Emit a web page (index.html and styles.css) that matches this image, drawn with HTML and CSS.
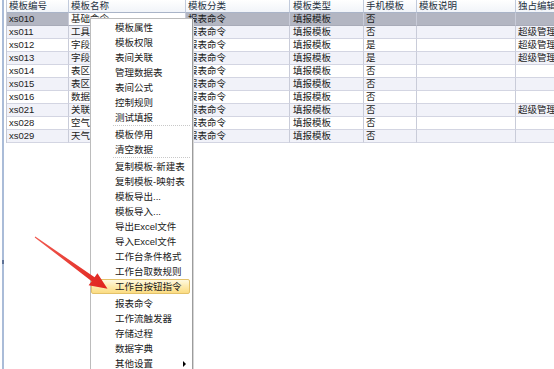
FILE: index.html
```html
<!DOCTYPE html>
<html lang="zh-CN">
<head>
<meta charset="utf-8">
<title>模板列表</title>
<link rel="stylesheet" href="styles.css">
</head>
<body>
<div class="screen">
  <div class="splitter"><span class="grip"></span></div>
  <div class="grid-wrap">
    <table class="grid">
      <colgroup>
        <col class="c1"><col class="c2"><col class="c3"><col class="c4"><col class="c5"><col class="c6"><col class="c7">
      </colgroup>
      <thead>
        <tr><th>模板编号</th><th>模板名称</th><th>模板分类</th><th>模板类型</th><th>手机模板</th><th>模板说明</th><th>独占编辑的用户</th></tr>
      </thead>
      <tbody>
        <tr class="sel"><td>xs010</td><td class="focus">基础命令</td><td>报表命令</td><td>填报模板</td><td>否</td><td></td><td></td></tr>
        <tr class="alt"><td>xs011</td><td>工具栏按钮</td><td>报表命令</td><td>填报模板</td><td>否</td><td></td><td>超级管理员</td></tr>
        <tr><td>xs012</td><td>字段映射</td><td>报表命令</td><td>填报模板</td><td>是</td><td></td><td>超级管理员</td></tr>
        <tr class="alt"><td>xs013</td><td>字段映射表</td><td>报表命令</td><td>填报模板</td><td>是</td><td></td><td>超级管理员</td></tr>
        <tr><td>xs014</td><td>表区域</td><td>报表命令</td><td>填报模板</td><td>否</td><td></td><td></td></tr>
        <tr class="alt"><td>xs015</td><td>表区域二</td><td>报表命令</td><td>填报模板</td><td>否</td><td></td><td></td></tr>
        <tr><td>xs016</td><td>数据关联</td><td>报表命令</td><td>填报模板</td><td>否</td><td></td><td></td></tr>
        <tr class="alt"><td>xs021</td><td>关联报表</td><td>报表命令</td><td>填报模板</td><td>否</td><td></td><td>超级管理员</td></tr>
        <tr><td>xs028</td><td>空气质量</td><td>报表命令</td><td>填报模板</td><td>否</td><td></td><td></td></tr>
        <tr class="alt"><td>xs029</td><td>天气预报</td><td>报表命令</td><td>填报模板</td><td>否</td><td></td><td></td></tr>
      </tbody>
    </table>
  </div>

  <div class="menu">
    <div class="item">模板属性</div>
    <div class="item">模板权限</div>
    <div class="item">表间关联</div>
    <div class="item">管理数据表</div>
    <div class="item">表间公式</div>
    <div class="item">控制规则</div>
    <div class="item">测试填报</div>
    <div class="sep"></div>
    <div class="item">模板停用</div>
    <div class="item">清空数据</div>
    <div class="sep"></div>
    <div class="item">复制模板-新建表</div>
    <div class="item">复制模板-映射表</div>
    <div class="item">模板导出...</div>
    <div class="item">模板导入...</div>
    <div class="item">导出Excel文件</div>
    <div class="item">导入Excel文件</div>
    <div class="item">工作台条件格式</div>
    <div class="item">工作台取数规则</div>
    <div class="item hot">工作台按钮指令</div>
    <div class="sep blank"></div>
    <div class="item">报表命令</div>
    <div class="item">工作流触发器</div>
    <div class="item">存储过程</div>
    <div class="item">数据字典</div>
    <div class="item">其他设置<span class="caret"></span></div>
  </div>

  <svg class="arrow" width="554" height="369" viewBox="0 0 554 369" aria-hidden="true">
    <defs>
      <linearGradient id="ag" x1="35" y1="237" x2="108" y2="289" gradientUnits="userSpaceOnUse">
        <stop offset="0" stop-color="#f05a50"/>
        <stop offset="1" stop-color="#e0231d"/>
      </linearGradient>
    </defs>
    <polygon points="35.3,236.6 94.6,277.2 97.4,273.2 107.5,288.8 88.6,285.2 91.7,281.2 34.7,237.4" fill="url(#ag)"/>
  </svg>
</div>
</body>
</html>
```

FILE: styles.css
```css
* { box-sizing: border-box; }
html, body { margin: 0; padding: 0; background: #fff; }
body {
  font-family: "Liberation Sans", "Noto Sans CJK SC", sans-serif;
  font-size: 9.5px;
  color: #1c1c1c;
}
.screen {
  position: relative;
  width: 554px;
  height: 369px;
  overflow: hidden;
  display: flex;
  background: #fff;
}
.splitter {
  position: relative;
  flex: none;
  width: 2px;
  margin: 0 2px;
  background: #aabcd8;
}
.grip {
  position: absolute;
  left: 0;
  top: 260px;
  width: 2px;
  height: 4px;
  background: #5e7296;
}
.grid-wrap { flex: none; width: 640px; }
.grid {
  width: 640px;
  table-layout: fixed;
  border-collapse: separate;
  border-spacing: 0;
  border-left: 1px solid #c4c9d6;
}
.c1 { width: 62px; }
.c2 { width: 117px; }
.c3 { width: 104px; }
.c4 { width: 74px; }
.c5 { width: 53px; }
.c6 { width: 99px; }
.c7 { width: 131px; }
th, td {
  padding: 0 0 0 2px;
  line-height: 12px;
  white-space: nowrap;
  overflow: hidden;
  text-align: left;
  font-weight: normal;
  border-right: 1px solid #c9ccd9;
  border-bottom: 1px solid #d3d5e2;
}
th {
  color: #25303f;
  background: linear-gradient(#ffffff, #f1f4f9);
  border-right-color: #c2cbdc;
  border-bottom-color: #a9b4c8;
}
td:nth-child(4), th:nth-child(4) { padding-left: 3px; }
tr.alt td { background: #f1f2f9; }
tr.sel td { background: #b3b6c2; border-bottom-color: #a8abb8; }
tr.sel td.focus { background: #fff; }
.menu {
  position: absolute;
  left: 90px;
  top: 18px;
  width: 103px;
  height: 360px;
  padding: 1px 2px 1px 0;
  background: #fff;
  border: 1px solid #bcbcbc;
  border-right-color: #9c9c9c;
  box-shadow: 1px 1px 0 #d6d6d6;
  font-family: "Liberation Sans", "Noto Sans CJK SC", sans-serif;
  font-size: 9.5px;
  color: #1a1a1a;
}
.item {
  display: flex;
  align-items: center;
  justify-content: space-between;
  height: 15px;
  line-height: 13px;
  padding: 0 3px 0 23px;
  border: 1px solid transparent;
  border-radius: 2px;
  white-space: nowrap;
}
.item.hot {
  background: linear-gradient(#fff9df, #fdeaae 50%, #fbdc82);
  border-color: #e3c26a;
}
.sep {
  height: 2px;
  margin: 0 0 0 22px;
  border-top: 1px dotted #c8c8c8;
}
.sep.blank { border-top-color: transparent; }
.caret {
  width: 0;
  height: 0;
  border-left: 3px solid #000;
  border-top: 3px solid transparent;
  border-bottom: 3px solid transparent;
}
.arrow {
  position: absolute;
  left: 0;
  top: 0;
  pointer-events: none;
}
```
